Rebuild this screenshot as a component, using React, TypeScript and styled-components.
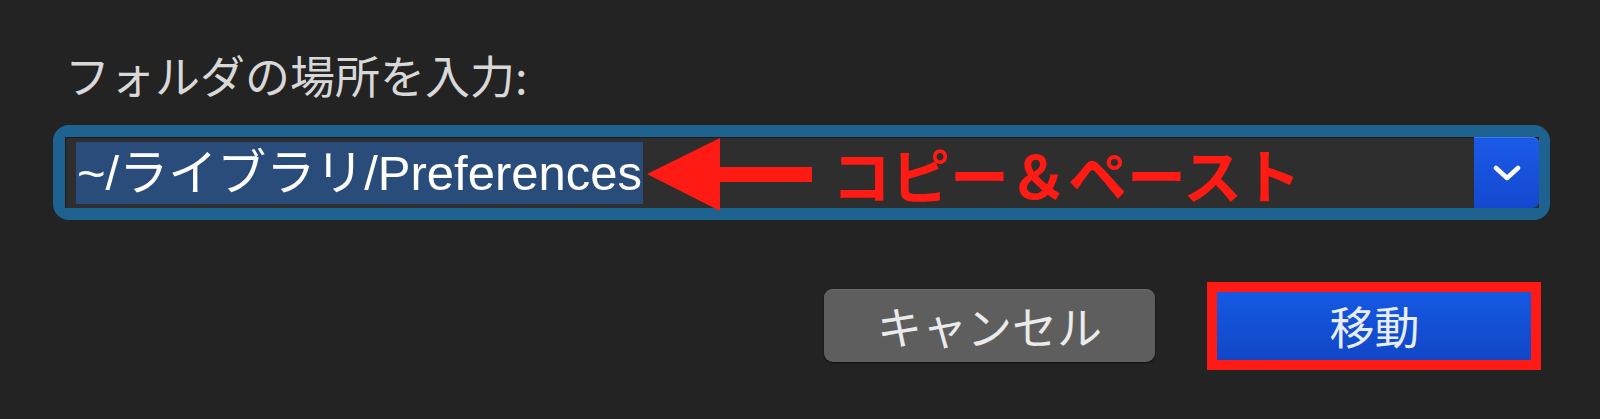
import React from 'react'
import styled, { createGlobalStyle } from 'styled-components'

const GlobalStyle = createGlobalStyle`
  html, body {
    margin: 0;
    padding: 0;
    background: #232323;
  }
  body {
    font-family: "Liberation Sans", "Noto Sans CJK JP", sans-serif;
  }
`

const Dialog = styled.div`
  box-sizing: border-box;
  width: 1600px;
  height: 419px;
  padding: 52px 50px 0 53px;
  background: #232323;
  display: flex;
  flex-direction: column;
`

const Label = styled.div`
  font-family: "Noto Sans CJK JP", sans-serif;
  font-size: 45px;
  line-height: 45px;
  color: #d8d8d8;
  padding-left: 12px;
`

const FieldRing = styled.div`
  margin-top: 28px;
  padding: 12px 11px 12px 12px;
  background: #1e6390;
  border-radius: 16px;
`

const Field = styled.div`
  display: flex;
  align-items: center;
  height: 71px;
  background: #2e2e2e;
  box-shadow: inset 0 1px 0 #1b1b1b, inset 1px 0 0 #1b1b1b;
`

const Selected = styled.span`
  margin-left: 11px;
  padding: 0 1px;
  height: 62px;
  line-height: 62px;
  background: #2a4c7a;
  color: #ffffff;
  font-size: 49px;
  white-space: nowrap;
`

const Arrow = styled.svg`
  flex: none;
  margin-left: 4px;
  margin-top: 3px;
  overflow: visible;
`

const Note = styled.span`
  margin-left: 20px;
  font-family: "Noto Sans CJK JP", sans-serif;
  font-weight: 700;
  font-size: 59px;
  line-height: 1;
  color: #ff1a14;
  white-space: nowrap;
  margin-top: 2px;
`

const DropButton = styled.div`
  margin-left: auto;
  align-self: stretch;
  width: 65px;
  display: flex;
  align-items: center;
  justify-content: center;
  background: linear-gradient(#1b5be8, #1448cf);
  border-radius: 0 7px 7px 0;
  box-shadow: inset 0 1px 0 #3a75f0;
`

const ButtonRow = styled.div`
  margin-top: 69px;
  padding-right: 10px;
  display: flex;
  justify-content: flex-end;
  gap: 54px;
`

const Button = styled.div<{ $primary?: boolean }>`
  position: relative;
  box-sizing: border-box;
  width: 331px;
  height: 73px;
  display: flex;
  align-items: center;
  justify-content: center;
  border-radius: 9px;
  font-family: "Noto Sans CJK JP", sans-serif;
  font-size: 45px;
  color: ${p => (p.$primary ? '#e8eef9' : '#ebebeb')};
  background: ${p =>
    p.$primary ? 'linear-gradient(#155ae4, #1146c6)' : '#5e5e5e'};
  box-shadow: inset 0 1px 0 ${p => (p.$primary ? '#3c78ef' : '#6c6c6c')},
    0 1px 2px rgba(0, 0, 0, 0.6);
`

const RedFrame = styled.div`
  position: absolute;
  top: -7px;
  bottom: -8px;
  left: -2px;
  right: -1px;
  border: 10px solid #ff1a16;
  pointer-events: none;
`

const App = () => {
  return (
    <>
      <GlobalStyle />
      <Dialog>
        <Label>フォルダの場所を入力:</Label>
        <FieldRing>
          <Field>
            <Selected>~/ライブラリ/Preferences</Selected>
            <Arrow width="165" height="73" viewBox="0 0 165 73">
              <polygon
                points="0,36 73,0 73,29 165,29 165,44 73,44 73,73"
                fill="#ff1a14"
              />
            </Arrow>
            <Note>コピー＆ペースト</Note>
            <DropButton>
              <svg width="28" height="16" viewBox="0 0 28 16">
                <polyline
                  points="3,3 14,13 25,3"
                  fill="none"
                  stroke="#ffffff"
                  strokeWidth="4.5"
                  strokeLinecap="round"
                  strokeLinejoin="round"
                />
              </svg>
            </DropButton>
          </Field>
        </FieldRing>
        <ButtonRow>
          <Button>キャンセル</Button>
          <Button $primary>
            移動
            <RedFrame />
          </Button>
        </ButtonRow>
      </Dialog>
    </>
  )
}

export default App
